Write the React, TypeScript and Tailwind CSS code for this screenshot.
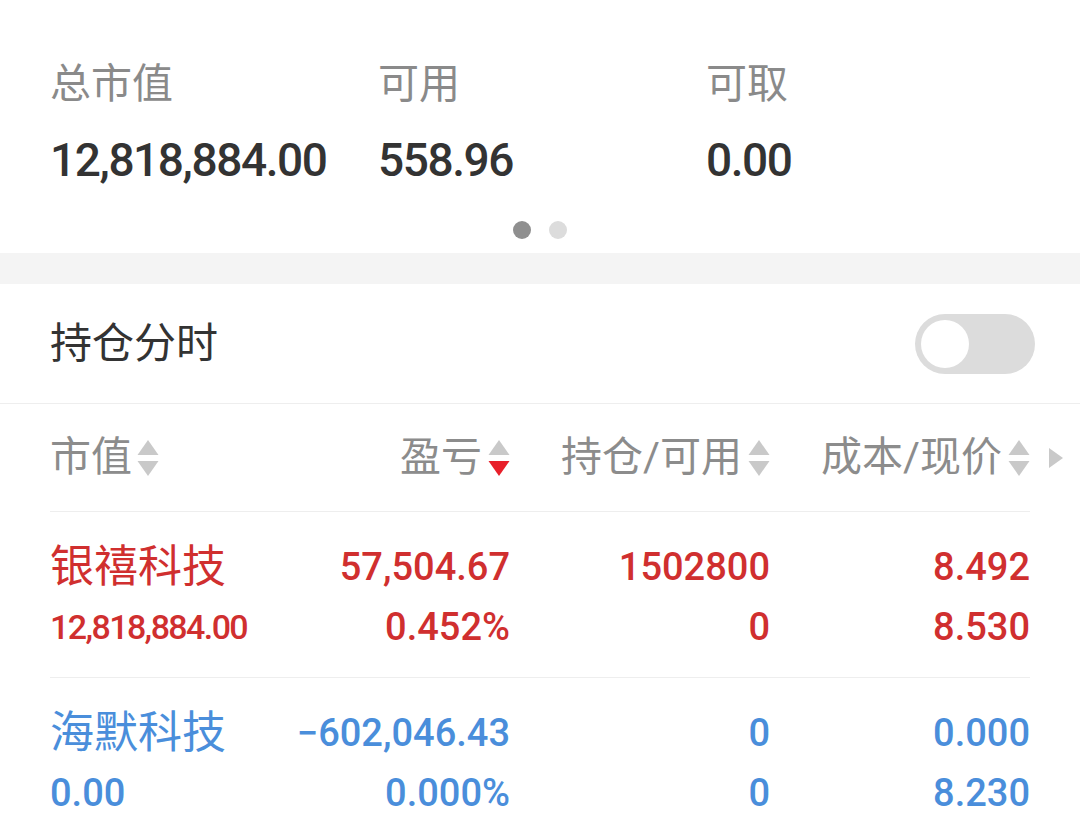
import React from "react";

const font = { fontFamily: "Roboto, 'Noto Sans CJK SC', sans-serif" };

function SortIcon({ active }: { active?: "up" | "down" }) {
  return (
    <svg width="22" height="38" viewBox="0 0 22 38" className="shrink-0">
      <polygon points="11,1 21.5,16 0.5,16" fill={active === "up" ? "#e8202a" : "#c9c9c9"} />
      <polygon points="0.5,22 21.5,22 11,37" fill={active === "down" ? "#e8202a" : "#c9c9c9"} />
    </svg>
  );
}

const summary = [
  { label: "总市值", value: "12,818,884.00" },
  { label: "可用", value: "558.96" },
  { label: "可取", value: "0.00" },
];

// long market values get squeezed to fit the first column
const holdings = [
  {
    name: "银禧科技",
    marketValue: "12,818,884.00",
    mvClass: "text-[34px] tracking-[-1.6px]",
    pnl: "57,504.67",
    pnlRate: "0.452%",
    hold: "1502800",
    avail: "0",
    cost: "8.492",
    price: "8.530",
    color: "text-[#d02f2f]",
  },
  {
    name: "海默科技",
    marketValue: "0.00",
    mvClass: "text-[38px]",
    pnl: "−602,046.43",
    pnlRate: "0.000%",
    hold: "0",
    avail: "0",
    cost: "0.000",
    price: "8.230",
    color: "text-[#4a8edb]",
  },
];

export default function App() {
  return (
    <div className="min-h-[832px] w-[1080px] overflow-hidden bg-white" style={font}>
      {/* account summary */}
      <section className="flex h-[253px] flex-col pt-[60px]">
        <div className="grid grid-cols-[328px_328px_1fr] pl-[50px]">
          {summary.map((s) => (
            <div key={s.label} className="flex flex-col">
              <span className="h-[48px] text-[41px] leading-[48px] text-[#8a8a8a]">{s.label}</span>
              <span className="mt-[24px] h-[56px] text-[46px] leading-[56px] font-medium tracking-[-1.4px] text-[#333]">
                {s.value}
              </span>
            </div>
          ))}
        </div>
        <div className="mt-[33px] flex justify-center gap-[18px]">
          <span className="size-[18px] rounded-full bg-[#8f8f8f]" />
          <span className="size-[18px] rounded-full bg-[#dcdcdc]" />
        </div>
      </section>

      <div className="h-[31px] bg-[#f4f4f4]" />

      {/* intraday toggle */}
      <div className="flex h-[120px] items-center justify-between border-b border-[#eeeeee] pr-[45px] pl-[50px]">
        <span className="text-[42px] text-[#333]">持仓分时</span>
        <div className="flex h-[60px] w-[120px] items-center rounded-full bg-[#dcdcdc] p-[6px]">
          <span className="size-[48px] rounded-full bg-white" />
        </div>
      </div>

      {/* table */}
      <div className="relative px-[50px]">
        <div className="grid h-[108px] grid-cols-[200px_260px_260px_260px] items-center border-b border-[#eeeeee] text-[41px] text-[#8c8c8c]">
          <div className="flex items-center gap-[5px]">
            市值
            <SortIcon />
          </div>
          <div className="flex items-center justify-end gap-[6px]">
            盈亏
            <SortIcon active="down" />
          </div>
          <div className="flex items-center justify-end gap-[6px]">
            持仓/可用
            <SortIcon />
          </div>
          <div className="flex items-center justify-end gap-[6px]">
            成本/现价
            <SortIcon />
          </div>
        </div>
        <svg width="16" height="22" viewBox="0 0 16 22" className="absolute top-[43px] right-[16px]">
          <polygon points="1,1 15,11 1,21" fill="#c9c9c9" />
        </svg>

        {holdings.map((h) => (
          <div
            key={h.name}
            className={`grid h-[166px] grid-cols-[200px_260px_260px_260px] border-b border-[#eeeeee] pt-[25px] ${h.color}`}
          >
            <div className="flex flex-col">
              <span className="h-[60px] text-[44px] leading-[60px]">{h.name}</span>
              <span className={`h-[60px] leading-[60px] font-medium whitespace-nowrap ${h.mvClass}`}>
                {h.marketValue}
              </span>
            </div>
            <div className="flex flex-col items-end text-[38px] leading-[60px] font-medium">
              <span className="h-[60px]">{h.pnl}</span>
              <span className="h-[60px]">{h.pnlRate}</span>
            </div>
            <div className="flex flex-col items-end text-[38px] leading-[60px] font-medium">
              <span className="h-[60px]">{h.hold}</span>
              <span className="h-[60px]">{h.avail}</span>
            </div>
            <div className="flex flex-col items-end text-[38px] leading-[60px] font-medium">
              <span className="h-[60px]">{h.cost}</span>
              <span className="h-[60px]">{h.price}</span>
            </div>
          </div>
        ))}
      </div>
    </div>
  );
}
